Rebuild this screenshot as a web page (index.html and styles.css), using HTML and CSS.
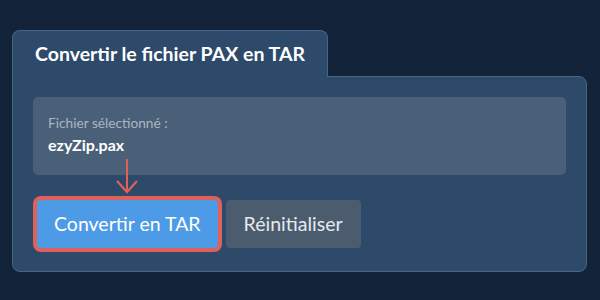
FILE: index.html
```html
<!DOCTYPE html>
<html lang="fr">
<head>
<meta charset="utf-8">
<title>Convertir PAX en TAR</title>
<link rel="stylesheet" href="styles.css">
</head>
<body>
<div class="converter">
  <div class="tab">Convertir le fichier PAX en TAR</div>
  <div class="panel">
    <div class="file-box">
      <div class="file-label">Fichier sélectionné :</div>
      <div class="file-name">ezyZip.pax</div>
    </div>
    <div class="actions">
      <svg class="arrow" width="24" height="36" viewBox="0 0 24 36" aria-hidden="true">
        <path d="M12 0 V33" fill="none" stroke="#e0605a" stroke-width="2"/>
        <path d="M2 22 L12 33 L22 22" fill="none" stroke="#e0605a" stroke-width="2.2"/>
      </svg>
      <button class="btn btn-primary">Convertir en TAR</button>
      <button class="btn btn-secondary">Réinitialiser</button>
    </div>
  </div>
</div>
</body>
</html>
```
FILE: styles.css
```css
html, body {
  margin: 0;
  padding: 0;
  background: #12233a;
}
body {
  width: 600px;
  height: 300px;
  overflow: hidden;
  font-family: Lato, "Open Sans", sans-serif;
  color: #ffffff;
}
.converter {
  padding: 30px 0 0 12px;
  width: 575px;
}
.tab {
  position: relative;
  z-index: 1;
  display: inline-block;
  background: #2d4a6b;
  border: 1px solid #4a6584;
  border-bottom: none;
  border-radius: 8px 8px 0 0;
  padding: 11px 22px 11px 22px;
  margin-bottom: -1px;
  font-size: 19.5px;
  line-height: 24px;
  font-weight: 700;
  color: #ffffff;
}
.panel {
  background: #2d4a6b;
  border: 1px solid #4a6584;
  border-radius: 0 8px 8px 8px;
  padding: 20px 20px 23px 20px;
}
.file-box {
  background: #4a6078;
  border-radius: 5px;
  padding: 18px 15px 20px 15px;
}
.file-label {
  font-size: 13.7px;
  line-height: 16px;
  color: #aab5c2;
}
.file-name {
  margin-top: 4px;
  font-size: 16px;
  line-height: 20px;
  font-weight: 700;
  color: #ffffff;
}
.actions {
  position: relative;
  display: flex;
  gap: 8px;
  margin-top: 25px;
  padding-left: 4px;
}
.arrow {
  position: absolute;
  left: 82px;
  top: -41px;
}
.btn {
  height: 48px;
  padding: 0 18px;
  border: none;
  border-radius: 4px;
  font-family: Lato, "Open Sans", sans-serif;
  font-size: 19.5px;
  line-height: 24px;
}
.btn-primary {
  background: #4d9be6;
  color: #ffffff;
  box-shadow: 0 0 0 4px #e0605a;
  padding: 0 17px;
}
.btn-secondary {
  background: #4b5c6e;
  color: #e6eaee;
}
```
